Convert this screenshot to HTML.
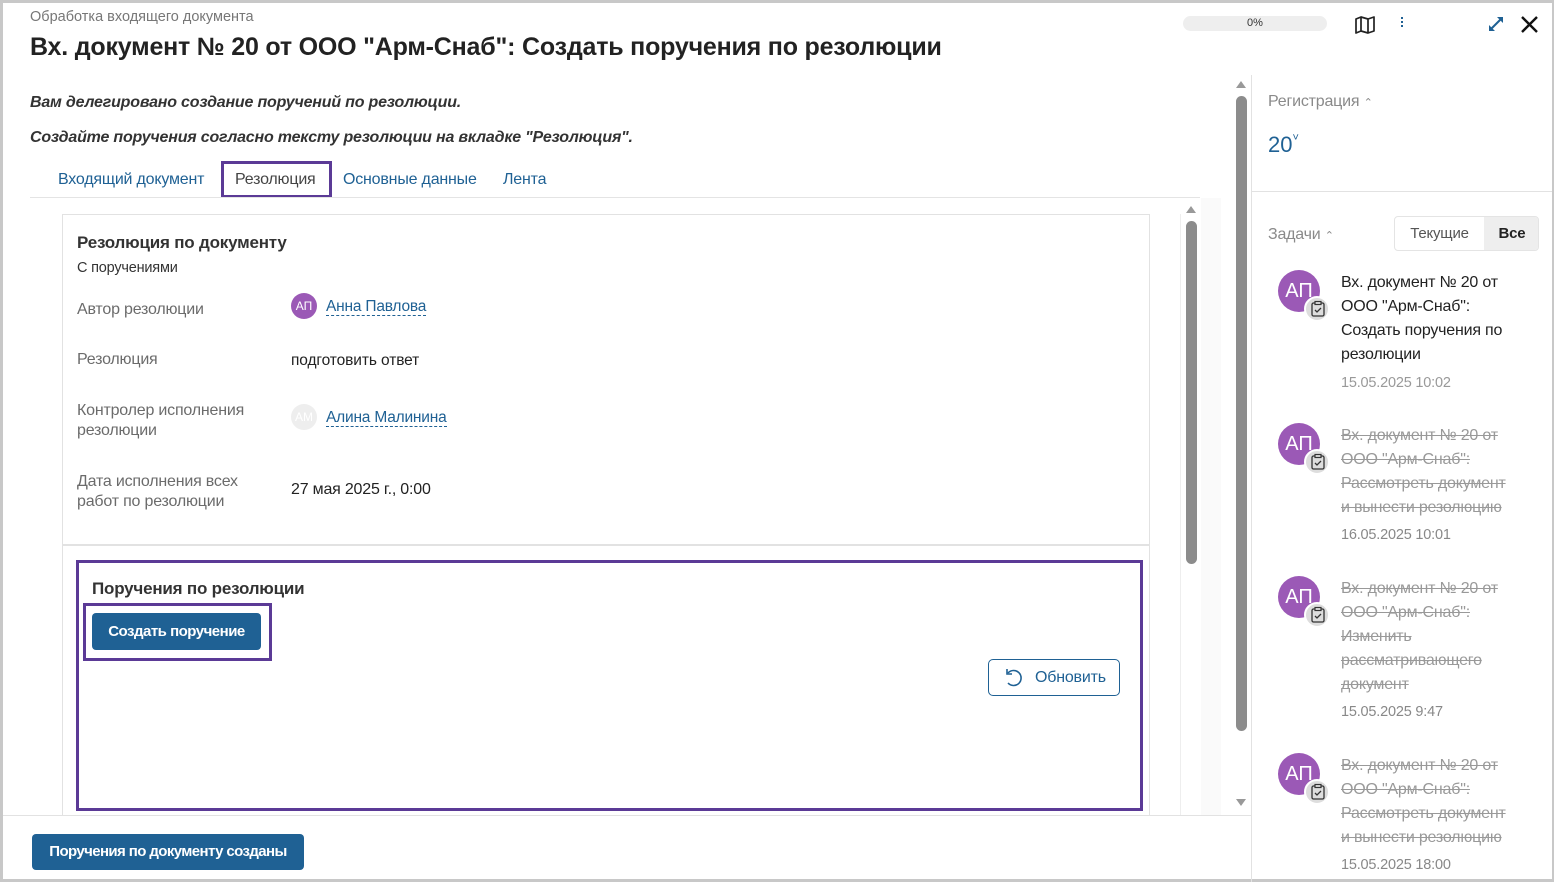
<!DOCTYPE html>
<html><head><meta charset="utf-8"><style>
*{box-sizing:border-box;margin:0;padding:0}
body{width:1554px;height:882px;position:relative;overflow:hidden;background:#fff;font-family:"Liberation Sans",sans-serif;color:#222}
.a{position:absolute;white-space:nowrap}
.blue{color:#1f6194}
.gray{color:#6b6b6b}
.t{font-size:16px;letter-spacing:-0.2px}
.av{position:absolute;border-radius:50%;color:#fff;text-align:center}
.task .txt{position:absolute;left:1341px;font-size:16px;line-height:24px;letter-spacing:-0.2px;white-space:nowrap}
.badge{position:absolute;width:26px;height:26px;border-radius:50%;background:#ddd;border:2px solid #fff}
</style></head><body>
<div class="a" style="left:0;top:0;width:1554px;height:882px;border:3px solid #c8c8c8;border-right-width:2px"></div>

<div class="a gray" style="left:30px;top:9px;font-size:14.5px;color:#777">Обработка входящего документа</div>
<div class="a" style="left:30px;top:33px;font-size:25px;font-weight:bold;letter-spacing:-0.2px;color:#222">Вх. документ № 20 от ООО "Арм-Снаб": Создать поручения по резолюции</div>

<div class="a" style="left:1183px;top:16px;width:144px;height:15px;border-radius:8px;background:#eee;font-size:11px;text-align:center;line-height:15px;color:#333">0%</div>
<svg class="a" style="left:1354px;top:16px" width="22" height="18" viewBox="0 0 22 18"><path d="M2 3 L7 1 L14 3 L20 1 L20 15 L14 17 L7 15 L2 17 Z M7 1 V15 M14 3 V17" fill="none" stroke="#222" stroke-width="1.7" stroke-linejoin="round"/></svg>
<div class="a" style="left:1401px;top:17px;width:2px;height:2px;background:#1f6194;box-shadow:0 4px 0 #1f6194,0 8px 0 #1f6194"></div>
<svg class="a" style="left:1486px;top:14px" width="20" height="20" viewBox="0 0 20 20"><path d="M4 16 L16 4" stroke="#1f6194" stroke-width="2"/><path d="M3 11 V17 H9 Z M11 3 H17 V9 Z" fill="#1f6194"/></svg>
<svg class="a" style="left:1520px;top:15px" width="19" height="19" viewBox="0 0 19 19"><path d="M2 2 L17 17 M17 2 L2 17" stroke="#111" stroke-width="2.4"/></svg>

<div class="a" style="left:30px;top:94px;font-size:16px;font-style:italic;font-weight:bold;letter-spacing:-0.2px;color:#333">Вам делегировано создание поручений по резолюции.</div>
<div class="a" style="left:30px;top:129px;font-size:16px;font-style:italic;font-weight:bold;letter-spacing:-0.2px;color:#333">Создайте поручения согласно тексту резолюции на вкладке "Резолюция".</div>

<div class="a t blue" style="left:58px;top:171px;font-size:16px">Входящий документ</div>
<div class="a" style="left:221px;top:161px;width:111px;height:37px;border:3px solid #5b3a96"></div>
<div class="a t" style="left:235px;top:171px;font-size:16px;color:#444">Резолюция</div>
<div class="a t blue" style="left:343px;top:171px;font-size:16px">Основные данные</div>
<div class="a t blue" style="left:503px;top:171px;font-size:16px">Лента</div>
<div class="a" style="left:30px;top:197px;width:1170px;height:1px;background:#e4e4e4"></div>

<div class="a" style="left:1236px;top:81px;border-left:5px solid transparent;border-right:5px solid transparent;border-bottom:7px solid #999"></div>
<div class="a" style="left:1236px;top:96px;width:11px;height:635px;border-radius:6px;background:#8c8c8c"></div>
<div class="a" style="left:1236px;top:799px;border-left:5px solid transparent;border-right:5px solid transparent;border-top:7px solid #999"></div>
<div class="a" style="left:1186px;top:206px;border-left:5px solid transparent;border-right:5px solid transparent;border-bottom:7px solid #999"></div>
<div class="a" style="left:1186px;top:221px;width:11px;height:343px;border-radius:6px;background:#8c8c8c"></div>
<div class="a" style="left:1180px;top:214px;width:1px;height:601px;background:#eee"></div>
<div class="a" style="left:1201px;top:198px;width:20px;height:617px;background:#fafafa"></div>

<div class="a" style="left:62px;top:214px;width:1088px;height:332px;border:1px solid #e2e2e2;border-bottom:2px solid #e2e2e2"></div>
<div class="a" style="left:77px;top:233px;font-size:17px;font-weight:bold;letter-spacing:-0.2px;color:#333">Резолюция по документу</div>
<div class="a t" style="left:77px;top:260px;font-size:14.5px;color:#333">С поручениями</div>
<div class="a t gray" style="left:77px;top:301px">Автор резолюции</div>
<div class="av" style="left:291px;top:293px;width:26px;height:26px;background:#9b59b6;font-size:12px;line-height:26px">АП</div>
<div class="a t blue" style="left:326px;top:299px;border-bottom:1px dashed #1f6194;line-height:16px;font-size:15.5px">Анна Павлова</div>
<div class="a t gray" style="left:77px;top:351px">Резолюция</div>
<div class="a t" style="left:291px;top:352px;font-size:15.5px;letter-spacing:-0.1px">подготовить ответ</div>
<div class="a t gray" style="left:77px;top:401px;line-height:20px">Контролер исполнения<br>резолюции</div>
<div class="av" style="left:291px;top:404px;width:26px;height:26px;background:#eee;font-size:12px;line-height:26px">АМ</div>
<div class="a t blue" style="left:326px;top:410px;border-bottom:1px dashed #1f6194;line-height:16px;font-size:15.5px">Алина Малинина</div>
<div class="a t gray" style="left:77px;top:472px;line-height:20px">Дата исполнения всех<br>работ по резолюции</div>
<div class="a t" style="left:291px;top:481px">27 мая 2025 г., 0:00</div>

<div class="a" style="left:62px;top:546px;width:1088px;height:270px;border-left:1px solid #e2e2e2;border-right:1px solid #e2e2e2"></div>
<div class="a" style="left:76px;top:560px;width:1067px;height:251px;border:3px solid #5b3a96"></div>
<div class="a" style="left:92px;top:579px;font-size:17px;font-weight:bold;letter-spacing:-0.2px;color:#333">Поручения по резолюции</div>
<div class="a" style="left:83px;top:603px;width:189px;height:58px;border:3px solid #5b3a96"></div>
<div class="a" style="left:92px;top:613px;width:169px;height:37px;border-radius:4px;background:#1f6194;color:#fff;font-size:15px;font-weight:bold;letter-spacing:-0.5px;text-align:center;line-height:37px">Создать поручение</div>
<div class="a" style="left:988px;top:659px;width:132px;height:37px;border:1px solid #1f6194;border-radius:5px"></div>
<svg class="a" style="left:1003px;top:667px" width="22" height="22" viewBox="0 0 22 22"><path d="M5 6 A7.5 7.5 0 1 1 5 16" fill="none" stroke="#1f6194" stroke-width="1.6"/><path d="M4 2 V7 H9" fill="none" stroke="#1f6194" stroke-width="1.6"/></svg>
<div class="a t blue" style="left:1035px;top:669px">Обновить</div>

<div class="a" style="left:3px;top:815px;width:1248px;height:1px;background:#e2e2e2"></div>
<div class="a" style="left:32px;top:834px;width:272px;height:36px;border-radius:4px;background:#1f6194;color:#fff;font-size:15px;font-weight:bold;letter-spacing:-0.6px;text-align:center;line-height:36px">Поручения по документу созданы</div>

<div class="a" style="left:1251px;top:75px;width:1px;height:807px;background:#e2e2e2"></div>
<div class="a" style="left:1251px;top:191px;width:301px;height:1px;background:#e2e2e2"></div>
<div class="a t" style="left:1268px;top:93px;color:#8a8a8a">Регистрация <span style="font-size:11px">⌃</span></div>
<div class="a blue" style="left:1268px;top:132px;font-size:22px">20<span style="font-size:11px;vertical-align:top">˅</span></div>
<div class="a t" style="left:1268px;top:226px;color:#8a8a8a">Задачи <span style="font-size:11px">⌃</span></div>
<div class="a" style="left:1394px;top:216px;width:145px;height:35px;border:1px solid #e4e4e4;border-radius:4px;overflow:hidden">
<div class="a t" style="left:0;top:0;width:89px;height:33px;line-height:33px;text-align:center;color:#555;font-size:15px">Текущие</div>
<div class="a t" style="left:89px;top:0;width:56px;height:33px;line-height:33px;text-align:center;background:#eee;font-weight:bold;color:#222;font-size:15px">Все</div>
</div>

<div class="task">
<div class="av" style="left:1278px;top:270px;width:42px;height:42px;background:#9b59b6;font-size:20px;line-height:42px">АП</div>
<div class="badge" style="left:1304px;top:296px"></div>
<div class="txt" style="top:271px;color:#222">Вх. документ № 20 от<br>ООО "Арм-Снаб":<br>Создать поручения по<br>резолюции</div>
<div class="txt" style="top:371px;color:#999;font-size:14.5px">15.05.2025 10:02</div>

<div class="av" style="left:1278px;top:423px;width:42px;height:42px;background:#9b59b6;font-size:20px;line-height:42px">АП</div>
<div class="badge" style="left:1304px;top:449px"></div>
<div class="txt" style="top:424px;color:#999;text-decoration:line-through">Вх. документ № 20 от<br>ООО "Арм-Снаб":<br>Рассмотреть документ<br>и вынести резолюцию</div>
<div class="txt" style="top:523px;color:#888;font-size:14.5px">16.05.2025 10:01</div>

<div class="av" style="left:1278px;top:576px;width:42px;height:42px;background:#9b59b6;font-size:20px;line-height:42px">АП</div>
<div class="badge" style="left:1304px;top:602px"></div>
<div class="txt" style="top:577px;color:#999;text-decoration:line-through">Вх. документ № 20 от<br>ООО "Арм-Снаб":<br>Изменить<br>рассматривающего<br>документ</div>
<div class="txt" style="top:700px;color:#888;font-size:14.5px">15.05.2025 9:47</div>

<div class="av" style="left:1278px;top:753px;width:42px;height:42px;background:#9b59b6;font-size:20px;line-height:42px">АП</div>
<div class="badge" style="left:1304px;top:779px"></div>
<div class="txt" style="top:754px;color:#999;text-decoration:line-through">Вх. документ № 20 от<br>ООО "Арм-Снаб":<br>Рассмотреть документ<br>и вынести резолюцию</div>
<div class="txt" style="top:853px;color:#888;font-size:14.5px">15.05.2025 18:00</div>
</div>
<svg class="a" style="left:1310px;top:300px" width="16" height="18" viewBox="0 0 16 18"><rect x="2" y="3" width="12" height="13" rx="1.5" fill="none" stroke="#333" stroke-width="1.3"/><rect x="5" y="1.5" width="6" height="3" fill="#ddd" stroke="#333" stroke-width="1.2"/><path d="M5 10 L7 12 L11 8" fill="none" stroke="#333" stroke-width="1.3"/></svg>
<svg class="a" style="left:1310px;top:453px" width="16" height="18" viewBox="0 0 16 18"><rect x="2" y="3" width="12" height="13" rx="1.5" fill="none" stroke="#333" stroke-width="1.3"/><rect x="5" y="1.5" width="6" height="3" fill="#ddd" stroke="#333" stroke-width="1.2"/><path d="M5 10 L7 12 L11 8" fill="none" stroke="#333" stroke-width="1.3"/></svg>
<svg class="a" style="left:1310px;top:606px" width="16" height="18" viewBox="0 0 16 18"><rect x="2" y="3" width="12" height="13" rx="1.5" fill="none" stroke="#333" stroke-width="1.3"/><rect x="5" y="1.5" width="6" height="3" fill="#ddd" stroke="#333" stroke-width="1.2"/><path d="M5 10 L7 12 L11 8" fill="none" stroke="#333" stroke-width="1.3"/></svg>
<svg class="a" style="left:1310px;top:783px" width="16" height="18" viewBox="0 0 16 18"><rect x="2" y="3" width="12" height="13" rx="1.5" fill="none" stroke="#333" stroke-width="1.3"/><rect x="5" y="1.5" width="6" height="3" fill="#ddd" stroke="#333" stroke-width="1.2"/><path d="M5 10 L7 12 L11 8" fill="none" stroke="#333" stroke-width="1.3"/></svg>
</body></html>
